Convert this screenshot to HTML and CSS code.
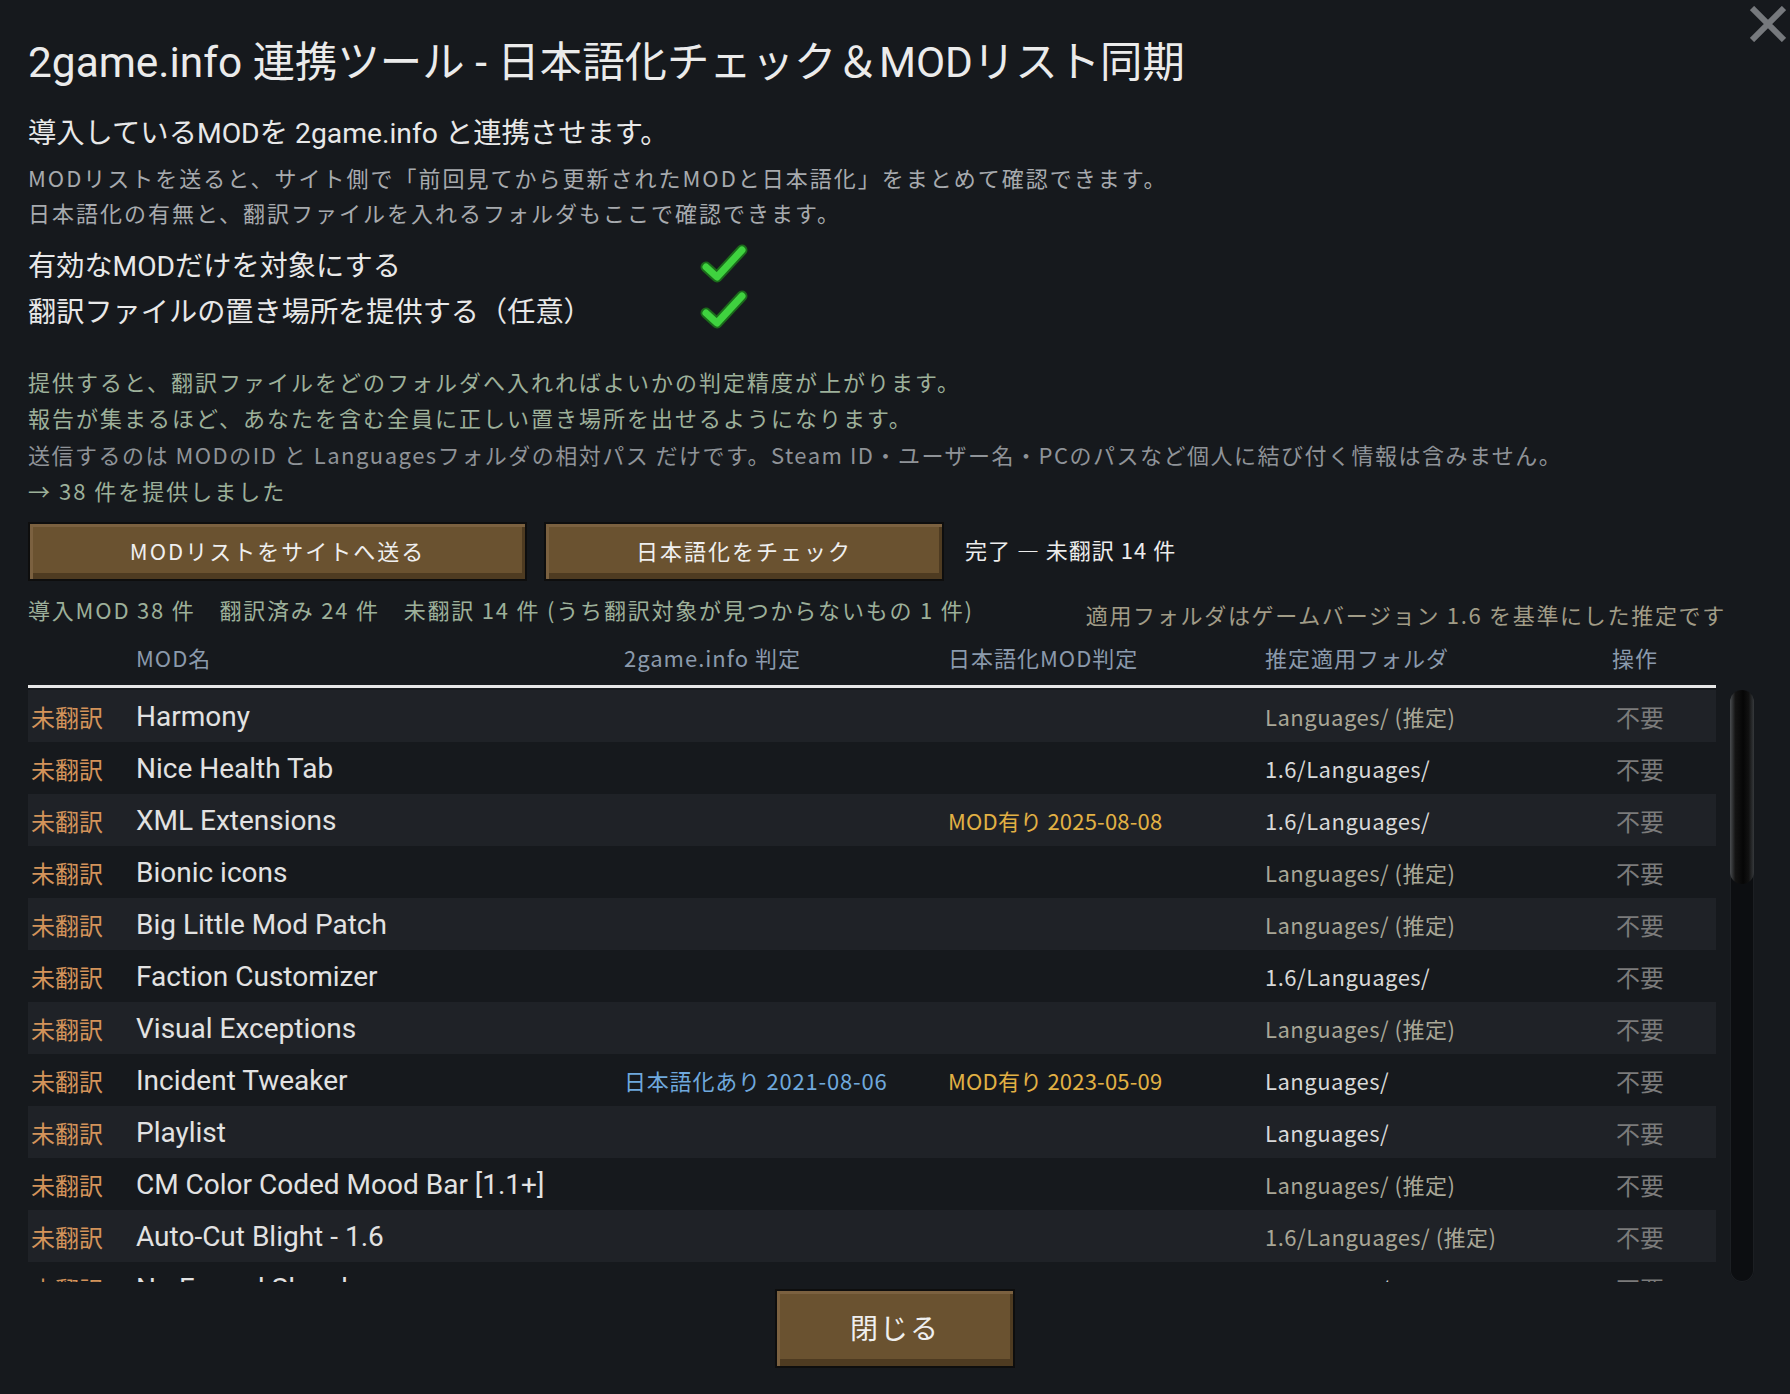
FILE: index.html
```html
<!DOCTYPE html>
<html lang="ja">
<head>
    <meta charset="UTF-8">
    <meta name="viewport" content="width=device-width, initial-scale=1.0">
    <title>2game.info 連携ツール</title>
    <link rel="stylesheet" href="styles.css">
</head>
<body>
<div class="dialog">
    <button class="close-x" aria-label="閉じる">
        <svg viewBox="0 0 36 36"><path d="M2 2 L34 34 M34 2 L2 34" /></svg>
    </button>

    <h1 class="title">2game.info 連携ツール - 日本語化チェック＆MODリスト同期</h1>
    <p class="lead">導入しているMODを 2game.info と連携させます。</p>
    <div class="desc">
        <p>MODリストを送ると、サイト側で「前回見てから更新されたMODと日本語化」をまとめて確認できます。</p>
        <p>日本語化の有無と、翻訳ファイルを入れるフォルダもここで確認できます。</p>
    </div>

    <div class="options">
        <div class="option">
            <span class="option-label">有効なMODだけを対象にする</span>
            <svg class="check" viewBox="0 0 48 40">
                <path class="check-edge" d="M6 24 L17 34 L42 7" />
                <path class="check-fill" d="M6 24 L17 34 L42 7" />
            </svg>
        </div>
        <div class="option">
            <span class="option-label">翻訳ファイルの置き場所を提供する（任意）</span>
            <svg class="check" viewBox="0 0 48 40">
                <path class="check-edge" d="M6 24 L17 34 L42 7" />
                <path class="check-fill" d="M6 24 L17 34 L42 7" />
            </svg>
        </div>
    </div>

    <div class="notes">
        <p class="note-green">提供すると、翻訳ファイルをどのフォルダへ入れればよいかの判定精度が上がります。</p>
        <p class="note-green">報告が集まるほど、あなたを含む全員に正しい置き場所を出せるようになります。</p>
        <p class="note-gray">送信するのは MODのID と Languagesフォルダの相対パス だけです。Steam ID・ユーザー名・PCのパスなど個人に結び付く情報は含みません。</p>
        <p class="note-green">→ 38 件を提供しました</p>
    </div>

    <div class="actions">
        <button class="btn btn-send">MODリストをサイトへ送る</button>
        <button class="btn btn-check">日本語化をチェック</button>
        <span class="status">完了 — 未翻訳 14 件</span>
    </div>

    <div class="summary">
        <span class="counts">導入MOD 38 件　翻訳済み 24 件　未翻訳 14 件 (うち翻訳対象が見つからないもの 1 件)</span>
        <span class="basis">適用フォルダはゲームバージョン 1.6 を基準にした推定です</span>
    </div>

    <div class="table">
        <div class="thead">
            <span></span>
            <span>MOD名</span>
            <span>2game.info 判定</span>
            <span>日本語化MOD判定</span>
            <span>推定適用フォルダ</span>
            <span>操作</span>
        </div>
        <div class="tbody-wrap">
            <div class="tbody">
                <div class="row">
                    <span class="st">未翻訳</span><span class="name">Harmony</span><span></span><span></span>
                    <span class="folder est">Languages/ (推定)</span><span class="op">不要</span>
                </div>
                <div class="row">
                    <span class="st">未翻訳</span><span class="name">Nice Health Tab</span><span></span><span></span>
                    <span class="folder">1.6/Languages/</span><span class="op">不要</span>
                </div>
                <div class="row">
                    <span class="st">未翻訳</span><span class="name">XML Extensions</span><span></span>
                    <span class="mod">MOD有り 2025-08-08</span>
                    <span class="folder">1.6/Languages/</span><span class="op">不要</span>
                </div>
                <div class="row">
                    <span class="st">未翻訳</span><span class="name">Bionic icons</span><span></span><span></span>
                    <span class="folder est">Languages/ (推定)</span><span class="op">不要</span>
                </div>
                <div class="row">
                    <span class="st">未翻訳</span><span class="name">Big Little Mod Patch</span><span></span><span></span>
                    <span class="folder est">Languages/ (推定)</span><span class="op">不要</span>
                </div>
                <div class="row">
                    <span class="st">未翻訳</span><span class="name">Faction Customizer</span><span></span><span></span>
                    <span class="folder">1.6/Languages/</span><span class="op">不要</span>
                </div>
                <div class="row">
                    <span class="st">未翻訳</span><span class="name">Visual Exceptions</span><span></span><span></span>
                    <span class="folder est">Languages/ (推定)</span><span class="op">不要</span>
                </div>
                <div class="row">
                    <span class="st">未翻訳</span><span class="name">Incident Tweaker</span>
                    <span class="jp">日本語化あり 2021-08-06</span>
                    <span class="mod">MOD有り 2023-05-09</span>
                    <span class="folder">Languages/</span><span class="op">不要</span>
                </div>
                <div class="row">
                    <span class="st">未翻訳</span><span class="name">Playlist</span><span></span><span></span>
                    <span class="folder">Languages/</span><span class="op">不要</span>
                </div>
                <div class="row">
                    <span class="st">未翻訳</span><span class="name">CM Color Coded Mood Bar [1.1+]</span><span></span><span></span>
                    <span class="folder est">Languages/ (推定)</span><span class="op">不要</span>
                </div>
                <div class="row">
                    <span class="st">未翻訳</span><span class="name">Auto-Cut Blight - 1.6</span><span></span><span></span>
                    <span class="folder est">1.6/Languages/ (推定)</span><span class="op">不要</span>
                </div>
                <div class="row">
                    <span class="st">未翻訳</span><span class="name">No Forced Slowdown</span><span></span><span></span>
                    <span class="folder">Languages/</span><span class="op">不要</span>
                </div>
            </div>
            <div class="scrollbar"><div class="thumb"></div></div>
        </div>
    </div>

    <div class="footer">
        <button class="btn btn-close">閉じる</button>
    </div>
</div>
</body>
</html>
```

FILE: styles.css
```css
:root {
    --bg: #16191d;
    --row-alt: #1f2227;
    --jp-font: "Noto Sans CJK JP", sans-serif;
    --ui-font: Roboto, "Noto Sans CJK JP", sans-serif;
}

body {
    margin: 0;
    background: var(--bg);
    color: #e6e6e6;
    font-family: var(--jp-font);
}

p { margin: 0; }

.dialog {
    position: relative;
    height: 1394px;
    padding: 0 28px;
    box-sizing: border-box;
    overflow: hidden;
}

/* close cross, top right corner */
.close-x {
    position: absolute;
    top: 6px;
    right: 4px;
    width: 36px;
    height: 36px;
    padding: 0;
    border: 0;
    background: none;
}
.close-x svg { width: 36px; height: 36px; display: block; }
.close-x path { stroke: #76797d; stroke-width: 6; fill: none; }

.title {
    margin: 38px 0 0;
    font: 400 42.4px/50px var(--ui-font);
    color: #ebebeb;
}

.lead {
    margin-top: 28px;
    font: 28.3px/36px var(--ui-font);
    color: #e8e8e8;
}

.desc {
    margin-top: 8px;
    font-size: 22px;
    line-height: 35px;
    letter-spacing: 2px;
    color: #a7aaae;
}

.options { margin-top: 10px; }
.option {
    display: flex;
    align-items: center;
    height: 46px;
}
.option-label {
    width: 672px;
    font: 28.2px var(--ui-font);
    color: #e8e8e8;
}
.check { width: 48px; height: 40px; }
.check path { fill: none; stroke-linecap: round; stroke-linejoin: round; }
.check-edge { stroke: #1b6a1b; stroke-width: 11; }
.check-fill { stroke: #3fd23f; stroke-width: 7; }

.notes {
    margin-top: 30.5px;
    font-size: 22px;
    line-height: 36.5px;
    letter-spacing: 2px;
}
.note-green { color: #9db09a; }
.note-gray { color: #8f9398; letter-spacing: 1.5px; }

.actions {
    margin-top: 13.5px;
    display: flex;
    align-items: center;
    gap: 17px;
}
.btn {
    box-sizing: border-box;
    height: 59px;
    border: 2px solid #0e0e0e;
    background: #6a5230;
    box-shadow: inset 3px 3px 0 #7b6140, inset -3px -6px 0 #4e3b21;
    color: #efefef;
    font-family: var(--jp-font);
    font-size: 22px;
    letter-spacing: 2px;
    padding: 0 0 4px;
}
.btn-send { width: 499px; }
.btn-check { width: 400px; }
.status {
    margin-left: 4px;
    padding-bottom: 6px;
    font-size: 22px;
    letter-spacing: 1px;
    color: #ececec;
}

.summary {
    margin-top: 6px;
    width: 1698px;
    height: 44px;
    display: flex;
    justify-content: space-between;
    align-items: center;
    font-size: 22px;
}
.counts { color: #9db09a; letter-spacing: 1.8px; }
.basis { color: #a19c87; padding-top: 10px; letter-spacing: 1.7px; }

.thead,
.row {
    display: grid;
    grid-template-columns: 108px 488px 324px 317px 347px 1fr;
    align-items: center;
}
.thead {
    width: 1688px;
    height: 51px;
    padding-bottom: 3px;
    border-bottom: 3px solid #e6e6e6;
    font-size: 22px;
    letter-spacing: 1px;
    color: #8b9aac;
}

.tbody-wrap {
    display: flex;
    gap: 14px;
    height: 594px;
}
.tbody {
    width: 1688px;
    padding-top: 2px;
    overflow: hidden;
}
.row {
    height: 52px;
    font-size: 22px;
    letter-spacing: 0.5px;
}
.row:nth-child(odd) { background: var(--row-alt); }

.st { padding-left: 3px; font-size: 24px; letter-spacing: 0; color: #d3935a; }
.name { font: 28px var(--ui-font); color: #e2e2e2; letter-spacing: 0; }
.jp { color: #6fa8dc; letter-spacing: 0.8px; }
.mod { color: #e2b144; letter-spacing: 0.2px; }
.folder { color: #d9d9d9; }
.folder.est { color: #a9a797; }
.op { padding-left: 4px; font-size: 24px; letter-spacing: 0; color: #7b7b7b; }

.scrollbar {
    width: 24px;
    margin-top: 2px;
    border-radius: 12px;
    background: #0c0e11;
    box-shadow: inset 0 0 0 1px #1c1f23;
}
.thumb {
    height: 194px;
    border-radius: 12px;
    background: linear-gradient(90deg, #4a4d50 0, #141414 22%, #060606 55%, #111 78%, #36393c 100%);
}

.footer {
    display: flex;
    justify-content: center;
    margin-top: 7px;
}
.btn-close {
    width: 240px;
    height: 79px;
    font-size: 28px;
    box-shadow: inset 3px 3px 0 #7b6140, inset -3px -7px 0 #4e3b21;
}
```
